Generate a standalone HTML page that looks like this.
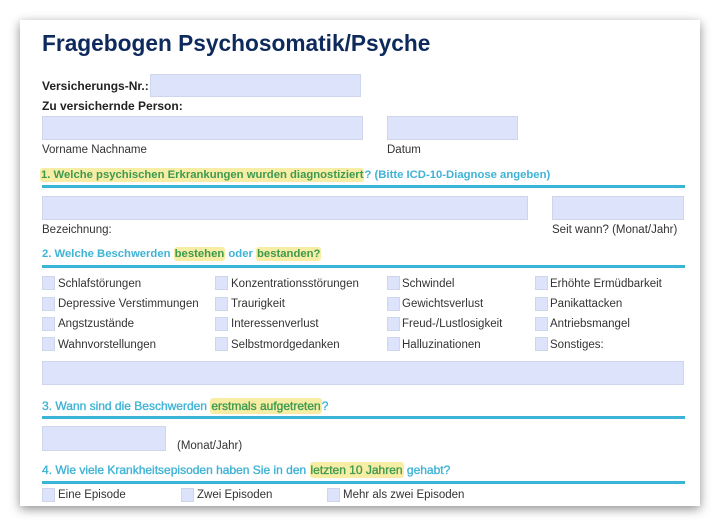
<!DOCTYPE html>
<html><head><meta charset="utf-8"><style>
*{margin:0;padding:0;box-sizing:border-box}
body{width:720px;height:526px;background:#fff;font-family:"Liberation Sans",sans-serif;position:relative;overflow:hidden}
.card{position:absolute;left:20px;top:20px;width:680px;height:486px;background:#fff;box-shadow:0 3px 10px rgba(0,0,0,.45)}
.a{position:absolute;white-space:nowrap}
.in{position:absolute;background:#dce3fb;border:1px solid #cfd6ec}
.cb{position:absolute;width:13px;height:14px;background:#dce3fb;border:1px solid #cfd6ec}
.t{font-size:11.5px;color:#333}
.h{font-size:11.3px;font-weight:bold;color:#3fb3d6}
.hl{background:#f8eda4;color:#3c9a50;border-radius:3px;padding:1px 1px}
.ln{position:absolute;left:42px;width:643px;height:3px;background:#3ab5d8}
.hn{font-size:12px;font-weight:normal;-webkit-text-stroke:0.35px #3fb3d6}
.hn .hl{-webkit-text-stroke:0.35px #3c9a50}
</style></head><body>
<div class="card"></div>
<div class="a" style="left:42px;top:30px;font-size:22.7px;font-weight:bold;color:#0e2a5c">Fragebogen Psychosomatik/Psyche</div>
<div class="a" style="left:42px;top:79px;font-size:12px;font-weight:bold;color:#222">Versicherungs-Nr.:</div>
<div class="in" style="left:150px;top:74px;width:211px;height:23px"></div>
<div class="a" style="left:42px;top:99px;font-size:12px;font-weight:bold;color:#222">Zu versichernde Person:</div>
<div class="in" style="left:42px;top:116px;width:321px;height:24px"></div>
<div class="in" style="left:387px;top:116px;width:131px;height:24px"></div>
<div class="a t" style="left:42px;top:144px">Vorname Nachname</div>
<div class="a t" style="left:387px;top:144px">Datum</div>
<div class="a h" style="left:40px;top:169px"><span class="hl">1. Welche psychischen Erkrankungen wurden diagnostiziert</span>? (Bitte ICD-10-Diagnose angeben)</div>
<div class="ln" style="top:185px"></div>
<div class="in" style="left:42px;top:196px;width:486px;height:24px"></div>
<div class="in" style="left:552px;top:196px;width:132px;height:24px"></div>
<div class="a t" style="left:42px;top:224px">Bezeichnung:</div>
<div class="a t" style="left:552px;top:224px">Seit wann? (Monat/Jahr)</div>
<div class="a h" style="left:42px;top:248px">2. Welche Beschwerden <span class="hl">bestehen</span> oder <span class="hl">bestanden?</span></div>
<div class="ln" style="top:265px"></div>
<div class="cb" style="left:42px;top:276px"></div><div class="a t" style="left:58px;top:278px">Schlafstörungen</div>
<div class="cb" style="left:215px;top:276px"></div><div class="a t" style="left:231px;top:278px">Konzentrationsstörungen</div>
<div class="cb" style="left:387px;top:276px"></div><div class="a t" style="left:402px;top:278px">Schwindel</div>
<div class="cb" style="left:535px;top:276px"></div><div class="a t" style="left:550px;top:278px">Erhöhte Ermüdbarkeit</div>
<div class="cb" style="left:42px;top:297px"></div><div class="a t" style="left:58px;top:298px">Depressive Verstimmungen</div>
<div class="cb" style="left:215px;top:297px"></div><div class="a t" style="left:231px;top:298px">Traurigkeit</div>
<div class="cb" style="left:387px;top:297px"></div><div class="a t" style="left:402px;top:298px">Gewichtsverlust</div>
<div class="cb" style="left:535px;top:297px"></div><div class="a t" style="left:550px;top:298px">Panikattacken</div>
<div class="cb" style="left:42px;top:317px"></div><div class="a t" style="left:58px;top:318px">Angstzustände</div>
<div class="cb" style="left:215px;top:317px"></div><div class="a t" style="left:231px;top:318px">Interessenverlust</div>
<div class="cb" style="left:387px;top:317px"></div><div class="a t" style="left:402px;top:318px">Freud-/Lustlosigkeit</div>
<div class="cb" style="left:535px;top:317px"></div><div class="a t" style="left:550px;top:318px">Antriebsmangel</div>
<div class="cb" style="left:42px;top:337px"></div><div class="a t" style="left:58px;top:339px">Wahnvorstellungen</div>
<div class="cb" style="left:215px;top:337px"></div><div class="a t" style="left:231px;top:339px">Selbstmordgedanken</div>
<div class="cb" style="left:387px;top:337px"></div><div class="a t" style="left:402px;top:339px">Halluzinationen</div>
<div class="cb" style="left:535px;top:337px"></div><div class="a t" style="left:550px;top:339px">Sonstiges:</div>
<div class="in" style="left:42px;top:361px;width:642px;height:24px"></div>
<div class="a h hn" style="left:42px;top:399px">3. Wann sind die Beschwerden <span class="hl">erstmals aufgetreten</span>?</div>
<div class="ln" style="top:416px"></div>
<div class="in" style="left:42px;top:426px;width:124px;height:25px"></div>
<div class="a t" style="left:177px;top:440px">(Monat/Jahr)</div>
<div class="a h hn" style="left:42px;top:463px">4. Wie viele Krankheitsepisoden haben Sie in den <span class="hl">letzten 10 Jahren</span> gehabt?</div>
<div class="ln" style="top:481px"></div>
<div class="cb" style="left:42px;top:488px"></div><div class="a t" style="left:58px;top:489px">Eine Episode</div>
<div class="cb" style="left:181px;top:488px"></div><div class="a t" style="left:197px;top:489px">Zwei Episoden</div>
<div class="cb" style="left:327px;top:488px"></div><div class="a t" style="left:343px;top:489px">Mehr als zwei Episoden</div>
</body></html>
